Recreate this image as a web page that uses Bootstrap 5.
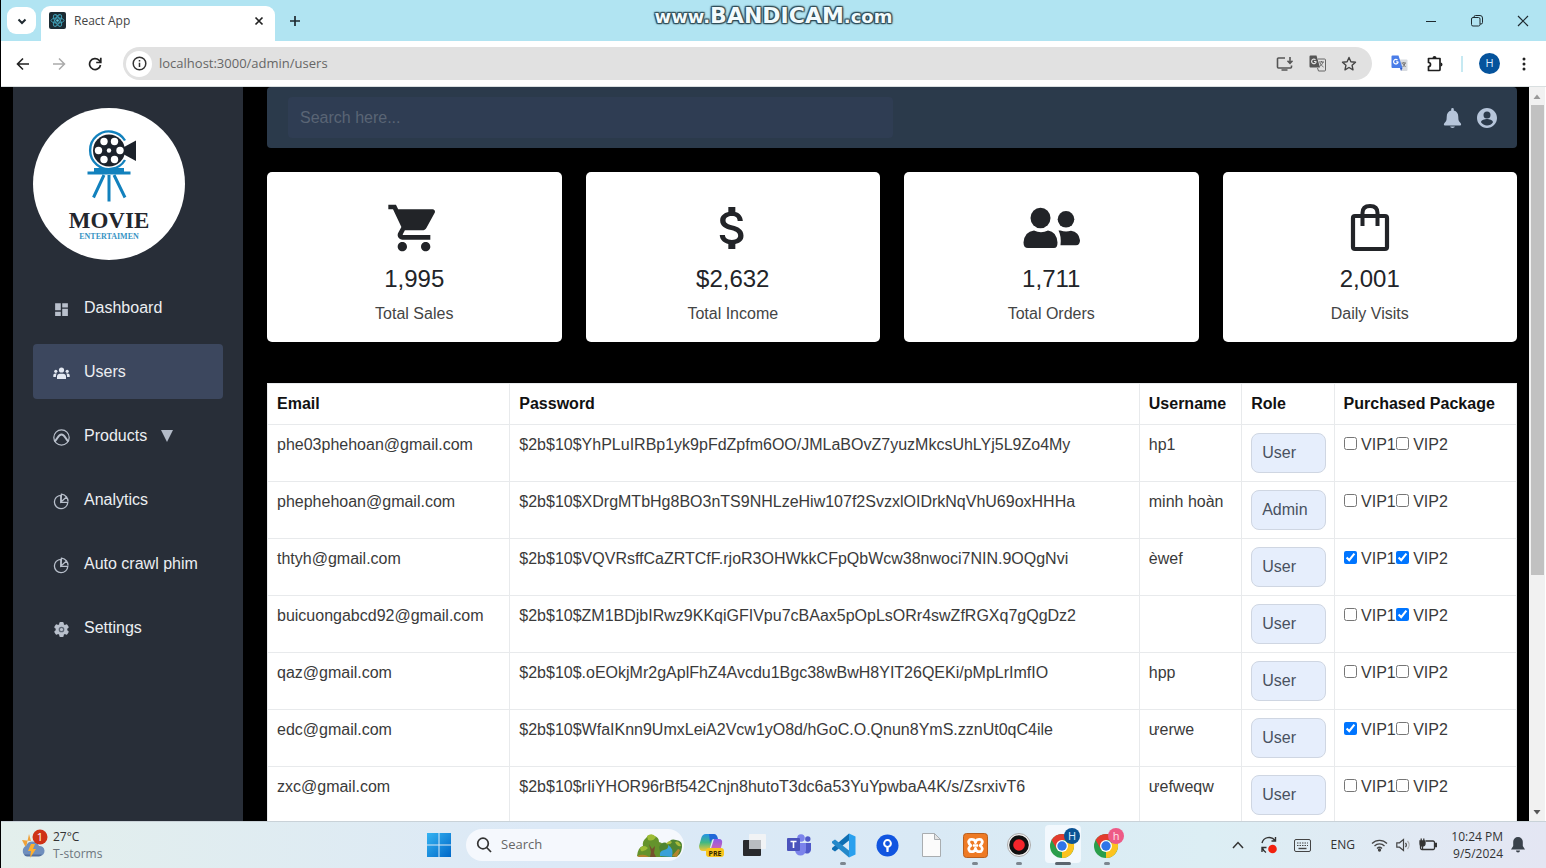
<!DOCTYPE html>
<html lang="en">
<head>
<meta charset="utf-8">
<meta name="viewport" content="width=device-width, initial-scale=1">
<title>React App</title>
<link href="https://cdn.jsdelivr.net/npm/bootstrap@5.3.0/dist/css/bootstrap.min.css" rel="stylesheet">
<style>
  :root { --ui: "Open Sans", "Noto Sans", sans-serif; --page: "Liberation Sans", Arial, sans-serif; }
  body { font-family: var(--page); font-size: 16px; border-left: 1px solid #000; }
  svg { display: block; flex: none; }
  button { background: none; border: 0; padding: 0; color: inherit; display: flex; align-items: center; justify-content: center; flex: none; }

  /* browser window */
  .tabstrip { background: #b1e4f2; height: 41px; font-family: var(--ui); padding-left: 6px; color: #1f2a30; }
  .tabsearch { width: 29px; height: 27px; border-radius: 9px; background: #fff; }
  .tab-item { width: 234px; height: 35px; background: #fff; border-radius: 9px 9px 0 0; font-size: 12px; color: #444; padding: 0 10px 6px 8px; margin-left: 5px; }
  .winbtn { width: 46px; height: 40px; }
  .watermark { left: 50%; top: 4px; transform: translateX(-50%); font: bold 18px/24px "DejaVu Sans", sans-serif; color: #f2fafc; white-space: nowrap;
    text-shadow: 0 0 2px #24414c, 1px 1px 1px #35525d, -1px -1px 1px #35525d, 1px -1px 1px #35525d, -1px 1px 1px #35525d, 0 0 3px #35525d; }
  .watermark b { font-size: 22px; }
  .toolbar { height: 46px; background: #fff; font-family: var(--ui); color: #222; padding: 0 14px 0 4px; border-bottom: 1px solid #d9dfe0; }
  .toolbtn { width: 36px; height: 34px; }
  .omni { height: 33px; background: #e1e1e1; border-radius: 17px; margin: 0 9px 0 10px; padding: 0 7px 0 3px; color: #555; }
  .infobtn { width: 26px; height: 26px; border-radius: 50%; background: #fff; color: #333; }
  .omni input { border: 0; background: none; outline: 0; font-size: 13px; color: #666; padding: 0 0 0 7px; min-width: 0; }
  .omnibtn { width: 32px; height: 32px; }
  .avatar { width: 21px; height: 21px; border-radius: 50%; background: #05539c; color: #dcecff; font-size: 11px; }

  /* page */
  .viewport { background: #000; min-height: 0; overflow: hidden; }
  .side { width: 230px; margin-left: 12px; padding: 21px 20px 0; background: #282e38; }
  .side ul { margin-top: 20px; gap: 9px; }
  .side a { height: 55px; padding-left: 20px; gap: 14px; border-radius: 4px; color: #eceef2; text-decoration: none; }
  .side a svg { color: #b9c0cc; margin-top: 3px; }
  .side a.current { background: #3c475e; }
  .side a.current svg { color: #e4e9f2; }
  .side a .caret { color: #b3bbc8; margin-top: 0; }
  .content { padding: 0 12px 0 24px; min-width: 0; }
  .topbar { height: 61px; background: #2b3a4b; border-radius: 4px; padding: 0 20px 0 21px; color: #b6c5da; }
  .topbar input { width: 50%; height: 41px; border: 0; border-radius: 4px; background: #2f3d53; color: #dde; padding: 0 12px; }
  .topbar input::placeholder { color: #5a6575; opacity: 1; }
  .stats { display: grid; grid-template-columns: repeat(4, 1fr); gap: 24px; margin-top: 24px; }
  .stat { background: #fff; border-radius: 5px; height: 170px; padding-top: 28px; color: #222428; }
  .stat .num { font-size: 24px; line-height: 32px; margin-top: 7px; }
  .stat .lab { line-height: 24px; margin-top: 7px; color: #444; }
  .users { margin-top: 41px; table-layout: fixed; background: #fff; --bs-table-bg: #fff; --bs-table-border-color: #e8eaec; white-space: nowrap; }
  .users > :not(caption) > * > * { color: #3a3a3a; padding-left: 9px; }
  .users > thead > tr > th { color: #111; }
  .c1 { width: 19.4%; } .c2 { width: 50.4%; } .c3 { width: 8.2%; } .c4 { width: 7.4%; }
  .users select { appearance: none; display: block; width: 100%; height: 40px; border: 1px solid #cfd6e2; border-radius: 8px; background: #e6eefc; color: #495160; padding: 0 10px; }
  .sbar { width: 17px; background: #f1f1f1; border-right: 1px solid #fff; color: #777; }
  .thumb { width: 13px; height: 64%; background: #c1c1c1; }

  /* taskbar */
  .taskbar { height: 47px; border-top: 1px solid #c9d2d8; background: linear-gradient(90deg, #e3efec, #dce9f7 35%, #d9e9f5 60%, #dceef4 78%, #e4e6f3); font-family: var(--ui); font-size: 12px; color: #333; }
  .weather { width: 416px; padding-left: 19px; gap: 5px; line-height: 17px; }
  .app { width: 44px; height: 47px; position: relative; }
  .app.open::after { content: ""; position: absolute; bottom: 4px; width: 6px; height: 3px; border-radius: 2px; background: #7c868f; }
  .app.active::after { width: 16px; background: #5b656e; }
  .find { width: 218px; height: 32px; border-radius: 16px; background: #f5f8fd; margin: 0 5px; padding: 0 1px 0 10px; gap: 9px; }
  .find input { border: 0; background: none; outline: 0; min-width: 0; flex: 1; padding: 0; font-size: 13px; }
  .find input::placeholder { color: #666; opacity: 1; }
  .tray { padding-right: 21px; }
  .lang { padding: 0 16px 0 12px; }
  .clock { line-height: 17px; width: 64px; margin-left: 2px; }
</style>
</head>
<body class="d-flex flex-column vh-100 overflow-hidden">

<header>
  <div class="tabstrip d-flex align-items-center position-relative">
    <button class="tabsearch" aria-label="Search tabs"><svg width="10" height="10" viewBox="0 0 10 10" fill="none" stroke="currentColor" stroke-width="2"><path d="M1.500 3.500 5 7l3.500-3.500"/></svg></button>
    <div class="tab-item d-flex align-items-center align-self-end">
      <svg width="17" height="17" viewBox="0 0 17 17"><rect width="17" height="17" rx="2" fill="#1c2b33"/><g fill="none" stroke="#3f9db4"><ellipse cx="8.500" cy="8.500" rx="6.500" ry="2.600"/><ellipse cx="8.500" cy="8.500" rx="6.500" ry="2.600" transform="rotate(60 8.500 8.500)"/><ellipse cx="8.500" cy="8.500" rx="6.500" ry="2.600" transform="rotate(120 8.500 8.500)"/></g><circle cx="8.500" cy="8.500" r="1.300" fill="#5cc6dd"/></svg>
      <span class="ms-2 flex-grow-1">React App</span>
      <button aria-label="Close tab"><svg width="12" height="12" viewBox="0 0 12 12" stroke="#222" stroke-width="1.700"><path d="M2.500 2.500l7 7M9.500 2.500l-7 7"/></svg></button>
    </div>
    <button class="ms-2 p-1" aria-label="New tab"><svg width="16" height="16" viewBox="0 0 16 16" stroke="#1f2a30" stroke-width="1.700"><path d="M8 3v10M3 8h10"/></svg></button>
    <div class="ms-auto d-flex">
      <button class="winbtn" aria-label="Minimize"><svg width="12" height="12" viewBox="0 0 12 12" stroke="currentColor"><path d="M1 6.500h10"/></svg></button>
      <button class="winbtn" aria-label="Restore"><svg width="12" height="12" viewBox="0 0 12 12" fill="none" stroke="currentColor"><rect x=".5" y="2.500" width="8.500" height="8.500" rx="1.500"/><path d="M3 2.500V2A1.500 1.500 0 0 1 4.500.5H9A2.500 2.500 0 0 1 11.500 3v4.500A1.500 1.500 0 0 1 10 9H9"/></svg></button>
      <button class="winbtn" aria-label="Close"><svg width="12" height="12" viewBox="0 0 12 12" stroke="currentColor" stroke-width="1.200"><path d="M1 1l10 10M11 1L1 11"/></svg></button>
    </div>
    <div class="watermark position-absolute">www.<b>BANDICAM</b>.com</div>
  </div>

  <div class="toolbar d-flex align-items-center">
    <button class="toolbtn" aria-label="Back"><svg width="14" height="14" viewBox="0 0 14 14" fill="none" stroke="currentColor" stroke-width="1.600"><path d="M13 7H2M7 1.500 1.500 7 7 12.500"/></svg></button>
    <button class="toolbtn" aria-label="Forward"><svg width="14" height="14" viewBox="0 0 14 14" fill="none" stroke="#aaa" stroke-width="1.500"><path d="M1 7h11M7 1.500 12.500 7 7 12.500"/></svg></button>
    <button class="toolbtn" aria-label="Reload"><svg width="14" height="14" viewBox="0 0 14 14" fill="none" stroke="currentColor" stroke-width="1.700"><path d="M12.500 8A5.500 5.500 0 1 1 11 3.200L12.500 5"/><path d="M12.800.8v4.700H8.200"/></svg></button>
    <div class="omni d-flex align-items-center flex-grow-1">
      <button class="infobtn" aria-label="Site information"><svg width="15" height="15" viewBox="0 0 15 15" fill="none" stroke="currentColor" stroke-width="1.500"><circle cx="7.500" cy="7.500" r="6.300"/><path d="M7.500 6.800V11M7.500 4v1.500"/></svg></button>
      <input class="flex-grow-1" aria-label="Address" value="localhost:3000/admin/users">
      <button class="omnibtn" aria-label="Install app"><svg width="18" height="16" viewBox="0 0 18 16" fill="none" stroke="currentColor" stroke-width="1.600"><path d="M9 2H2.500A1 1 0 0 0 1.500 3v8a1 1 0 0 0 1 1h12a1 1 0 0 0 1-1V9.500M5.500 14h6M14 1v6M11.500 4.800 14 7.300l2.500-2.500"/></svg></button>
      <button class="omnibtn" aria-label="Translate"><svg width="17" height="17" viewBox="0 0 17 17"><path d="M1.500.5h6l3.500 12H1.500a1 1 0 0 1-1-1v-10a1 1 0 0 1 1-1z" fill="#555"/><path d="M9 4h6.500a1 1 0 0 1 1 1v10a1 1 0 0 1-1 1H9.500L8.500 13M10 7h5M12.500 6v1M14 7c-.5 2-2 3.500-3.500 4.500M11 8c.6 1.500 2 3 3.500 4" fill="none" stroke="#666"/><path d="M7.200 6.500H5M7.200 6.500A2.300 2.300 0 1 1 6.500 4.700" fill="none" stroke="#e1e1e1" stroke-width="1.200"/></svg></button>
      <button class="omnibtn" aria-label="Bookmark"><svg width="16" height="16" viewBox="0 0 16 16" fill="none" stroke="#444" stroke-width="1.400" stroke-linejoin="round"><path d="M8 1.500l1.900 4.200 4.600.5-3.400 3.100.9 4.500L8 11.500l-4 2.300.9-4.500L1.500 6.200l4.600-.5z"/></svg></button>
    </div>
    <div class="d-flex align-items-center">
      <button class="toolbtn" aria-label="Google Translate"><svg width="17" height="17" viewBox="0 0 17 17"><path d="M7 4.500h8.500a1 1 0 0 1 1 1v9.500a1 1 0 0 1-1 1H10z" fill="#d8dbe0"/><path d="M1.500.5h6L11.500 13h-10a1 1 0 0 1-1-1V1.500a1 1 0 0 1 1-1z" fill="#4a7de8"/><path d="M9 13h2.500L10 16z" fill="#2a56c6"/><path d="M7.200 6.800H5.200M7.200 6.800A2.300 2.300 0 1 1 6.500 5" fill="none" stroke="#fff" stroke-width="1.200"/><path d="M10.500 8H15M12.800 7v1M14.200 8c-.4 1.800-1.600 3-2.600 4M11.500 8.500l3 3.500" fill="none" stroke="#777"/></svg></button>
      <button class="toolbtn" aria-label="Extensions"><svg width="18" height="18" viewBox="0 0 18 18"><path d="M2.500 3.500H14V14.500a1 1 0 0 1-1 1H2.500v-4a2 2 0 0 0 0-4z" fill="none" stroke="#1f1f1f" stroke-width="1.700" stroke-linejoin="round"/><path d="M6.500 3a2 2 0 0 1 4 0zM14.500 7.500a2 2 0 0 1 0 4z" fill="#1f1f1f"/></svg></button>
      <svg class="mx-2" width="2" height="16"><rect width="2" height="16" fill="#c6e9f2"/></svg>
      <button class="avatar mx-2" aria-label="Profile">H</button>
      <button class="ms-2" aria-label="Menu"><svg width="16" height="16" viewBox="0 0 16 16" fill="#222"><circle cx="8" cy="3" r="1.500"/><circle cx="8" cy="8" r="1.500"/><circle cx="8" cy="13" r="1.500"/></svg></button>
    </div>
  </div>
</header>

<div class="viewport d-flex flex-grow-1">
  <nav class="side flex-shrink-0">
    <svg width="152" height="152" viewBox="0 0 152 152" role="img" aria-label="Movie Entertaimen">
      <circle cx="76" cy="76" r="76" fill="#fff"/>
      <g fill="none" stroke="#1281bd">
        <path d="M92 32.500A18.800 18.800 0 1 0 92 52" stroke-width="2.400"/>
        <path d="M61 62h30" stroke-width="4"/><path d="M54.500 65h43" stroke-width="3"/>
        <path d="M71 67 60.500 89.500M76 67v26.500M81 67l11 22.500" stroke-width="3"/>
      </g>
      <circle cx="76" cy="42.500" r="16" fill="#1c222b"/>
      <path d="M91 39l12-6.500v20.500l-12-6.500z" fill="#1c222b"/>
      <g fill="#fff"><circle cx="76" cy="42.500" r="2.200"/><circle cx="65.500" cy="42.500" r="3.700"/><circle cx="87" cy="42.500" r="3.700"/><circle cx="71" cy="33.500" r="3.700"/><circle cx="81.500" cy="33.500" r="3.700"/><circle cx="71" cy="51.500" r="3.700"/><circle cx="81.500" cy="51.500" r="3.700"/></g>
      <text x="76" y="120" text-anchor="middle" font-family="Liberation Serif, serif" font-weight="bold" font-size="23" fill="#23262d">MOVIE</text>
      <text x="76" y="131" text-anchor="middle" font-family="Liberation Serif, serif" font-weight="bold" font-size="8" fill="#3793c4">ENTERTAIMEN</text>
    </svg>
    <ul class="list-unstyled d-flex flex-column mb-0">
      <li><a class="d-flex align-items-center" href="#"><svg width="17" height="17" viewBox="0 0 24 24" fill="currentColor"><path d="M3 13h8V3H3v10zm0 8h8v-6H3v6zm10 0h8V11h-8v10zm0-18v6h8V3h-8z"/></svg>Dashboard</a></li>
      <li><a class="current d-flex align-items-center" href="#" aria-current="page"><svg width="17" height="17" viewBox="0 0 17 17" fill="currentColor"><circle cx="8.500" cy="5" r="2.600"/><circle cx="2.800" cy="6.300" r="1.600"/><circle cx="14.200" cy="6.300" r="1.600"/><path d="M4 14v-2.500A3 3 0 0 1 7 8.800h3a3 3 0 0 1 3 2.700V14zM.3 12v-1.500c0-1.200.8-2 2-2h1.500C3.100 9.500 2.900 10.500 2.900 12zM16.700 12v-1.500c0-1.200-.8-2-2-2h-1.500c.7 1 .9 2 .9 3.500z"/></svg>Users</a></li>
      <li><a class="d-flex align-items-center" href="#"><svg width="17" height="17" viewBox="0 0 17 17" fill="none" stroke="currentColor"><circle cx="8.500" cy="8.500" r="7.700" stroke-width="1.200"/><path d="M1.500 12.500C4.500 10.500 5 5.500 8.500 5.500s4 5 7 7" stroke-width="2"/></svg>Products<svg class="caret" width="12" height="12" viewBox="0 0 12 12"><path d="M0 0h12L6 12z" fill="currentColor"/></svg></a></li>
      <li><a class="d-flex align-items-center" href="#"><svg width="17" height="17" viewBox="0 0 17 17" fill="none" stroke="currentColor" stroke-width="1.300"><path d="M7.800 2.300a6.700 6.700 0 1 0 7 7H7.800z"/><path d="M8 9 13.500 4A7 7 0 0 0 8.500 1.200zM13.500 4a6.500 6.500 0 0 1 1.500 4.500"/></svg>Analytics</a></li>
      <li><a class="d-flex align-items-center" href="#"><svg width="17" height="17" viewBox="0 0 17 17" fill="none" stroke="currentColor" stroke-width="1.300"><path d="M7.800 2.300a6.700 6.700 0 1 0 7 7H7.800z"/><path d="M8 9 13.500 4A7 7 0 0 0 8.500 1.200zM13.500 4a6.500 6.500 0 0 1 1.500 4.500"/></svg>Auto crawl phim</a></li>
      <li><a class="d-flex align-items-center" href="#"><svg width="17" height="17" viewBox="0 0 17 17"><g fill="#b9c0cc"><circle cx="8.500" cy="8.500" r="5.800"/><rect x="6.300" y="1" width="4.400" height="15" rx="1.200"/><rect x="6.300" y="1" width="4.400" height="15" rx="1.200" transform="rotate(60 8.500 8.500)"/><rect x="6.300" y="1" width="4.400" height="15" rx="1.200" transform="rotate(120 8.500 8.500)"/></g><circle cx="8.500" cy="8.500" r="2.200" fill="none" stroke="#5b6472" stroke-width="1.300"/></svg>Settings</a></li>
    </ul>
  </nav>

  <main class="content flex-grow-1">
    <div class="topbar d-flex align-items-center">
      <input type="search" placeholder="Search here..." aria-label="Search">
      <button class="ms-auto" aria-label="Notifications"><svg width="24" height="24" viewBox="0 0 24 24" fill="currentColor"><path d="M11.500 22c1.300 0 2.300-.6 2.300-1.400H9.200c0 .8 1 1.400 2.300 1.400zm7.800-5.200c-1.400-1.400-2-2.300-2-5.800 0-3.500-1.600-5.600-4.500-6.400V3.300a1.300 1.300 0 0 0-2.600 0v1.300C7.300 5.400 5.700 7.500 5.700 11c0 3.500-.6 4.400-2 5.800-1.300 1.400-1 2.700.2 2.700h15.200c1.200 0 1.500-1.300.2-2.700z"/></svg></button>
      <button class="ms-2 ps-1" aria-label="Account"><svg width="20" height="20" viewBox="2 2 20 20" fill="currentColor"><path d="M12 2C6.480 2 2 6.480 2 12s4.480 10 10 10 10-4.480 10-10S17.520 2 12 2zm0 3.500a3.500 3.500 0 1 1 0 7 3.500 3.500 0 0 1 0-7zm0 13.900c-2.500 0-4.710-1.280-6-3.220.03-1.990 4-3.080 6-3.080s5.970 1.090 6 3.080a7.200 7.200 0 0 1-6 3.220z"/></svg></button>
    </div>

    <section class="stats text-center">
      <div class="stat"><svg class="mx-auto" width="56" height="56" viewBox="0 0 24 24" fill="currentColor"><path d="M7 18c-1.100 0-1.990.9-1.990 2S5.900 22 7 22s2-.9 2-2-.9-2-2-2zM1 2v2h2l3.600 7.590-1.350 2.450c-.16.28-.25.610-.25.960 0 1.100.9 2 2 2h12v-2H7.420c-.14 0-.25-.11-.25-.25l.03-.12.9-1.630h7.450c.75 0 1.410-.41 1.750-1.030l3.580-6.490c.08-.14.12-.31.12-.48 0-.55-.45-1-1-1H5.210l-.94-2H1zm16 16c-1.100 0-1.990.9-1.990 2s.89 2 1.990 2 2-.9 2-2-.9-2-2-2z"/></svg><div class="num">1,995</div><div class="lab">Total Sales</div></div>
      <div class="stat"><svg class="mx-auto" width="56" height="56" viewBox="0 0 24 24" fill="currentColor"><path d="M11.800 10.900c-2.270-.59-3-1.200-3-2.150 0-1.090 1.010-1.850 2.700-1.850 1.780 0 2.440.85 2.500 2.100h2.210c-.07-1.720-1.120-3.300-3.210-3.810V3h-3v2.160c-1.940.42-3.500 1.680-3.500 3.610 0 2.310 1.910 3.460 4.700 4.130 2.500.6 3 1.480 3 2.410 0 .69-.49 1.790-2.700 1.790-2.060 0-2.870-.92-2.980-2.100h-2.200c.12 2.190 1.760 3.420 3.680 3.830V21h3v-2.150c1.950-.37 3.500-1.500 3.500-3.550 0-2.840-2.430-3.810-4.700-4.400z"/></svg><div class="num">$2,632</div><div class="lab">Total Income</div></div>
      <div class="stat"><svg class="mx-auto" width="58" height="56" viewBox="0 0 58 56" fill="currentColor"><ellipse cx="18.500" cy="18" rx="10" ry="10.300"/><ellipse cx="44" cy="19.300" rx="8.300" ry="8.300"/><path d="M12 30.500q7 3.500 14 0 8.500 1 9.500 12 0 5.500-3.500 5.500H6q-4.500 0-4.500-5.500 1-11 10.500-12zM36.500 30.500h2q5 2 10.500.3 8 1 9 9.500 0 5-4 5H38.500Q39.500 36 36.500 30.500z"/></svg><div class="num">1,711</div><div class="lab">Total Orders</div></div>
      <div class="stat"><svg class="mx-auto" width="56" height="56" viewBox="0 0 56 56" fill="none" stroke="currentColor" stroke-width="4.200" stroke-linejoin="round"><rect x="11" y="16" width="34" height="33" rx="2"/><path d="M20.500 26V13q0-7 7.500-7t7.500 7v13" stroke-width="4"/><path d="M10 48.500h36" stroke-width="3"/></svg><div class="num">2,001</div><div class="lab">Daily Visits</div></div>
    </section>

    <table class="users table table-bordered mb-0">
      <colgroup><col class="c1"><col class="c2"><col class="c3"><col class="c4"><col></colgroup>
      <thead><tr><th scope="col">Email</th><th scope="col">Password</th><th scope="col">Username</th><th scope="col">Role</th><th scope="col">Purchased Package</th></tr></thead>
      <tbody>
        <tr><td>phe03phehoan@gmail.com</td><td>$2b$10$YhPLuIRBp1yk9pFdZpfm6OO/JMLaBOvZ7yuzMkcsUhLYj5L9Zo4My</td><td>hp1</td><td><select aria-label="Role"><option selected>User</option><option>Admin</option></select></td><td><label><input type="checkbox"> VIP1</label><label><input type="checkbox"> VIP2</label></td></tr>
        <tr><td>phephehoan@gmail.com</td><td>$2b$10$XDrgMTbHg8BO3nTS9NHLzeHiw107f2SvzxlOIDrkNqVhU69oxHHHa</td><td>minh hoàn</td><td><select aria-label="Role"><option>User</option><option selected>Admin</option></select></td><td><label><input type="checkbox"> VIP1</label><label><input type="checkbox"> VIP2</label></td></tr>
        <tr><td>thtyh@gmail.com</td><td>$2b$10$VQVRsffCaZRTCfF.rjoR3OHWkkCFpQbWcw38nwoci7NIN.9OQgNvi</td><td>èwef</td><td><select aria-label="Role"><option selected>User</option><option>Admin</option></select></td><td><label><input type="checkbox" checked> VIP1</label><label><input type="checkbox" checked> VIP2</label></td></tr>
        <tr><td>buicuongabcd92@gmail.com</td><td>$2b$10$ZM1BDjbIRwz9KKqiGFIVpu7cBAax5pOpLsORr4swZfRGXq7gQgDz2</td><td></td><td><select aria-label="Role"><option selected>User</option><option>Admin</option></select></td><td><label><input type="checkbox"> VIP1</label><label><input type="checkbox" checked> VIP2</label></td></tr>
        <tr><td>qaz@gmail.com</td><td>$2b$10$.oEOkjMr2gAplFhZ4Avcdu1Bgc38wBwH8YIT26QEKi/pMpLrImfIO</td><td>hpp</td><td><select aria-label="Role"><option selected>User</option><option>Admin</option></select></td><td><label><input type="checkbox"> VIP1</label><label><input type="checkbox"> VIP2</label></td></tr>
        <tr><td>edc@gmail.com</td><td>$2b$10$WfaIKnn9UmxLeiA2Vcw1yO8d/hGoC.O.Qnun8YmS.zznUt0qC4ile</td><td>ưerwe</td><td><select aria-label="Role"><option selected>User</option><option>Admin</option></select></td><td><label><input type="checkbox" checked> VIP1</label><label><input type="checkbox"> VIP2</label></td></tr>
        <tr><td>zxc@gmail.com</td><td>$2b$10$rIiYHOR96rBf542Cnjn8hutoT3dc6a53YuYpwbaA4K/s/ZsrxivT6</td><td>ưefweqw</td><td><select aria-label="Role"><option selected>User</option><option>Admin</option></select></td><td><label><input type="checkbox"> VIP1</label><label><input type="checkbox"> VIP2</label></td></tr>
      </tbody>
    </table>
  </main>

  <div class="sbar d-flex flex-column align-items-center flex-shrink-0" aria-hidden="true">
    <svg width="16" height="18" viewBox="0 0 16 18"><path d="M4.500 12 8 7.500 11.500 12z" fill="#999"/></svg>
    <div class="thumb"></div>
    <svg class="mt-auto" width="16" height="18" viewBox="0 0 16 18"><path d="M4.500 7 8 11.500 11.500 7z" fill="#555"/></svg>
  </div>
</div>

<footer class="taskbar d-flex align-items-center flex-shrink-0">
  <div class="weather d-flex align-items-center">
    <svg width="28" height="32" viewBox="0 0 28 32"><path d="M9 5l2 7-9-1 4 8z" fill="#f0a23a"/><path d="M6 27a5.500 5.500 0 0 1 0-10 7 7 0 0 1 13 0 5 5 0 0 1 1 10z" fill="#6f8fbd"/><path d="M4 25.500h18q-1 2-3 2H7q-2 0-3-2z" fill="#526f9c"/><path d="M11 15l-3 7h3l-1 7 6-9h-3l2-5z" fill="#ffb02e"/><circle cx="20" cy="8" r="7.500" fill="#cf3216"/><text x="20" y="12" text-anchor="middle" font-family="Open Sans, sans-serif" font-size="11" fill="#fff">1</text></svg>
    <div>27°C<div class="text-secondary">T-storms</div></div>
  </div>
  <button class="app" aria-label="Start"><svg width="24" height="24" viewBox="0 0 24 24"><defs><linearGradient id="win" x1="0" y1="0" x2="1" y2="1"><stop offset="0" stop-color="#35b4f2"/><stop offset="1" stop-color="#0067c8"/></linearGradient></defs><path d="M0 0h11.500v11.500H0zM12.500 0H24v11.500H12.500zM0 12.500h11.500V24H0zM12.500 12.500H24V24H12.500z" fill="url(#win)"/></svg></button>
  <div class="find d-flex align-items-center">
    <svg width="16" height="16" viewBox="0 0 16 16" fill="none" stroke="#333" stroke-width="1.700"><circle cx="7" cy="6.500" r="5.300"/><path d="M10.700 10.500 15 15"/></svg>
    <input type="text" placeholder="Search" aria-label="Search Windows">
    <svg width="46" height="26" viewBox="0 0 46 26"><path d="M0 24q1-9 6-10-1-5 3-8 3-5 8-2 5 1 5 6 5 1 5 7v8H3z" fill="#64932c"/><path d="M10 4q5-4 9 1-3 5-8 3zM3 16q4-4 8 0-3 4-7 3z" fill="#9cbc36"/><path d="M22 15q4-7 9-3 2-6 8-4 7 1 6 7-1 9-7 10H24z" fill="#4f8430"/><path d="M29 12q3-5 6-2-1 3-6 2zM38 10q4-2 6 4-4 1-6-4z" fill="#a8bb3a"/><path d="M12 12l3 5 3-3-1 7 2 4h-6l1-5z" fill="#75502c"/><path d="M23 24q-1-5 4-6 5-1 4-5 6 3 4 12z" fill="#3aa1d8"/><path d="M0 24q7-3 12 1H2zM35 24l6-7 2 1-3 7z" fill="#b3852e"/></svg>
  </div>
  <button class="app" aria-label="Copilot"><svg width="26" height="26" viewBox="0 0 26 26"><defs><linearGradient id="cp1" x2="0" y2="1"><stop stop-color="#2393e6"/><stop offset=".5" stop-color="#42b883"/><stop offset="1" stop-color="#f3c831"/></linearGradient><linearGradient id="cp2" x2="0" y2="1"><stop stop-color="#8a5be8"/><stop offset="1" stop-color="#f76894"/></linearGradient></defs><path d="M8 2h8l-5 17H5q-4 0-4-5l2-7q1-5 5-5z" fill="url(#cp1)"/><path d="M16 7h5q4 0 3 5l-2 7q-1 4-5 4h-6z" fill="url(#cp2)"/><path d="M11 2h5q3 0 4 5h-4q-3 0-4 4z" fill="#2068d8"/><rect x="8" y="16" width="18" height="9" rx="3" fill="#f8c51c"/><text x="17" y="23.500" text-anchor="middle" font-family="Open Sans, sans-serif" font-weight="bold" font-size="7" fill="#332600">PRE</text></svg></button>
  <button class="app" aria-label="Task view"><svg width="24" height="24" viewBox="0 0 24 24"><rect y="7" width="18" height="16" rx="1" fill="#292a2d"/><rect x="6" y="1" width="17" height="15" rx="1" fill="#f4f4f4" fill-opacity=".85"/><path d="M6 7h12v9H6z" fill="#b9bcc0"/></svg></button>
  <button class="app" aria-label="Teams"><svg width="25" height="24" viewBox="0 0 25 24"><circle cx="14" cy="5" r="3.800" fill="#7b83eb"/><circle cx="20.800" cy="6" r="2.700" fill="#5059c9"/><path d="M17 10h7v7a4 4 0 0 1-6 3z" fill="#5059c9"/><path d="M8 10h11v7a5.500 5.500 0 0 1-11 0z" fill="#7b83eb"/><rect y="5" width="13" height="13" rx="1" fill="#4b53bc"/><path d="M3.500 8.500h6M6.500 8.500V15" stroke="#fff" stroke-width="1.600"/></svg></button>
  <button class="app open" aria-label="Visual Studio Code"><svg width="25" height="25" viewBox="0 0 25 25"><path d="M18 .5v7L4 18.500 1 16.500v-1.500z" fill="#0f6fb3"/><path d="M18 24.500v-7L4 6.500 1 8.500V10z" fill="#2489ca"/><path d="M18 .5 24.500 3.500v18L18 24.500z" fill="#2aa0ee"/></svg></button>
  <button class="app" aria-label="Location app"><svg width="23" height="23" viewBox="0 0 23 23"><circle cx="11.500" cy="11.500" r="11" fill="#1155e0"/><path d="M10.200 13.500h2.600L12.500 18h-2z" fill="#fff"/><circle cx="11.500" cy="9.500" r="3.400" fill="#1155e0" stroke="#fff" stroke-width="2"/></svg></button>
  <button class="app" aria-label="Document"><svg width="19" height="24" viewBox="0 0 19 24" fill="#fbfbfb" stroke="#a9adb0"><path d="M.5.5h12l6 6v17H.5z"/><path d="M12.500.5v6h6z" fill="#e4e4e4"/></svg></button>
  <button class="app open" aria-label="XAMPP"><svg width="25" height="25" viewBox="0 0 25 25"><rect x=".5" y=".5" width="24" height="24" rx="3" fill="#ee7a24" stroke="#b85f1f"/><path d="M7 6.500q5-1 5.500 3 .5-4 5.500-3 3 3-1 6 4 3 1 6-5 1-5.500-3-.5 4-5.500 3-3-3 1-6-4-3-1-6z" fill="none" stroke="#fff" stroke-width="2.800" stroke-linejoin="round"/><path d="M10 12.500h5" stroke="#fff" stroke-width="2.500"/></svg></button>
  <button class="app open" aria-label="Bandicam"><svg width="24" height="24" viewBox="0 0 24 24"><circle cx="12" cy="12" r="11.500" fill="#f4f4f4" stroke="#aaa"/><circle cx="12" cy="12" r="9.800" fill="#111"/><circle cx="12" cy="12" r="5.800" fill="#f5252b"/></svg></button>
  <button class="app open active" aria-label="Chrome, profile H"><svg width="36" height="40" viewBox="0 0 36 40"><rect width="36" height="38" rx="4" fill="#f2f8fd"/><g id="chrome"><circle cx="17" cy="21" r="12" fill="#2b9e4b"/><path d="M17 21 27.400 15A12 12 0 0 1 17 33z" fill="#fcc31e"/><path d="M17 15h10.400A12 12 0 0 0 6.600 15l5.200 9z" fill="#e33b2e"/><circle cx="17" cy="21" r="6" fill="#fff"/><circle cx="17" cy="21" r="4.700" fill="#2f75e8"/></g><circle cx="27" cy="11" r="8" fill="#0b5394"/><text x="27" y="15" text-anchor="middle" font-family="Open Sans, sans-serif" font-size="11" fill="#dcecff">H</text></svg></button>
  <button class="app open" aria-label="Chrome, profile h"><svg width="36" height="40" viewBox="0 0 36 40"><use href="#chrome"/><circle cx="27" cy="11" r="8" fill="#ee5a86"/><text x="27" y="15" text-anchor="middle" font-family="Open Sans, sans-serif" font-size="11" fill="#ffe3ec">h</text></svg></button>

  <div class="tray d-flex align-items-center ms-auto">
    <button class="px-2" aria-label="Hidden icons"><svg width="12" height="8" viewBox="0 0 12 8" fill="none" stroke="#333" stroke-width="1.500"><path d="M1 7l5-5.500L11 7"/></svg></button>
    <button class="px-2" aria-label="Updates"><svg width="18" height="18" viewBox="0 0 18 18"><path d="M2 7a7.300 7.300 0 0 1 13-2.500M15.500 1v4H11.500M6 16.500A7.500 7.500 0 0 1 2.500 12M2 16v-4.500h4.500" fill="none" stroke="#333" stroke-width="1.400"/><circle cx="12.500" cy="13" r="4.300" fill="#f2210e"/></svg></button>
    <button class="px-2" aria-label="Touch keyboard"><svg width="17" height="13" viewBox="0 0 17 13" fill="none" stroke="#444"><rect x=".5" y=".5" width="16" height="12" rx="1.500"/><path d="M3 4h11M3 6.500h11" stroke-dasharray="1.500 1"/><path d="M4.500 9.500h8" stroke-width="1.400"/></svg></button>
    <span class="lang">ENG</span>
    <svg width="17" height="14" viewBox="0 0 17 14" fill="none" stroke="#444" stroke-width="1.300"><path d="M1 5.500a10.500 10.500 0 0 1 15 0M3.500 8a7 7 0 0 1 10 0M6 10.500a3.600 3.600 0 0 1 5 0"/><circle cx="8.500" cy="12" r="1" fill="#333"/></svg>
    <svg class="ms-2" width="15" height="14" viewBox="0 0 15 14" fill="none" stroke="#444" stroke-width="1.200"><path d="M.8 4.800h2.700L7.500 1.500v11L3.500 9.200H.8z"/><path d="M9.500 4.800a3.500 3.500 0 0 1 0 4.400"/><path d="M11.500 3a6 6 0 0 1 0 8" stroke="#aaa"/></svg>
    <svg class="ms-2" width="18" height="14" viewBox="0 0 18 14" fill="none" stroke="#333" stroke-width="1.300"><path d="M7 3h7a1.500 1.500 0 0 1 1.500 1.500v5A1.500 1.500 0 0 1 14 11.500H3A1.500 1.500 0 0 1 1.500 10V7"/><path d="M16 5.500h1.500v3H16z" fill="#333"/><path d="M1 3h5v2.500a2.500 2.500 0 0 1-5 0zM3.500 8v3M2.200.5V3M4.800.5V3" fill="#333"/></svg>
    <div class="clock text-end">10:24 PM<div>9/5/2024</div></div>
    <button class="ms-2" aria-label="Notification centre"><svg width="14" height="16" viewBox="0 0 14 16" fill="#3a424b"><path d="M7 0a4.800 4.800 0 0 1 4.800 5v4L14 12.500H0L2.200 9V5A4.800 4.800 0 0 1 7 0zM5 13.500h4a2 2 0 0 1-4 0z"/></svg></button>
  </div>
</footer>

<script src="https://cdn.jsdelivr.net/npm/bootstrap@5.3.0/dist/js/bootstrap.bundle.min.js"></script>
</body>
</html>
